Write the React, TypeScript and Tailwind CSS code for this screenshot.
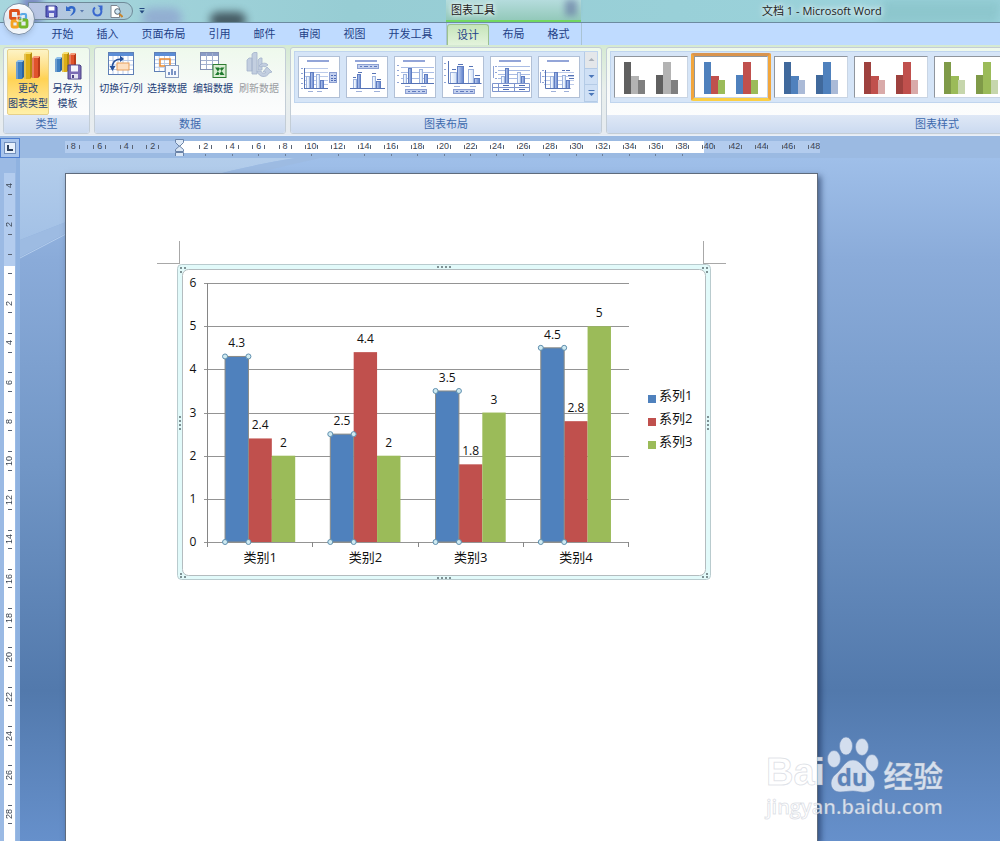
import type { ReactNode } from "react";

const tabs = [
  { name: "开始", wide: false },
  { name: "插入", wide: false },
  { name: "页面布局", wide: true },
  { name: "引用", wide: false },
  { name: "邮件", wide: false },
  { name: "审阅", wide: false },
  { name: "视图", wide: false },
  { name: "开发工具", wide: true },
];

const chartStyles = [
  ["#606060", "#b3b3b3", "#7f7f7f"],
  ["#4f81bd", "#c0504d", "#9bbb59"],
  ["#40699c", "#4f81bd", "#aabad7"],
  ["#9e413e", "#c0504d", "#d9aaa9"],
  ["#7f9a48", "#9bbb59", "#c6d6ac"],
];

const series = [
  { name: "系列1", color: "#4f81bd", values: [4.3, 2.5, 3.5, 4.5] },
  { name: "系列2", color: "#c0504d", values: [2.4, 4.4, 1.8, 2.8] },
  { name: "系列3", color: "#9bbb59", values: [2, 2, 3, 5] },
];
const categories = ["类别1", "类别2", "类别3", "类别4"];

const hMarks = [8, 6, 4, 2, 0, ...Array.from({ length: 24 }, (_, i) => (i + 1) * 2)];
const vMarks = [4, 2, 0, ...Array.from({ length: 14 }, (_, i) => (i + 1) * 2)];

/* ---------- icons ---------- */

function Column({ x, y, h, w, front, side, top }: { x: number; y: number; h: number; w: number; front: string; side: string; top: string }) {
  return (
    <g>
      <path d={`M${x} ${y + 2}h${w}v${h}h${-w}z`} fill={front} />
      <path d={`M${x + w} ${y + 2}l2 -2v${h}l-2 2z`} fill={side} />
      <path d={`M${x} ${y + 2}l2 -2h${w}l-2 2z`} fill={top} />
      <path d={`M${x} ${y + 2}h2v${h}h-2z`} fill="#fff" opacity="0.25" />
    </g>
  );
}

function ChartTypeIcon() {
  return (
    <svg width="26" height="28" viewBox="0 0 26 28">
      <Column x={1} y={8} h={17} w={6} front="#3f7fc0" side="#2a639f" top="#8fc0ea" />
      <Column x={9} y={0} h={25} w={6} front="#dcae18" side="#b58a0c" top="#f8e27a" />
      <Column x={17} y={4} h={20} w={6} front="#e0532c" side="#b93a19" top="#f59b78" />
    </svg>
  );
}

function SaveTemplateIcon() {
  return (
    <svg width="28" height="28" viewBox="0 0 28 28">
      <Column x={1} y={5} h={13} w={5} front="#3f7fc0" side="#2a639f" top="#8fc0ea" />
      <Column x={8} y={0} h={18} w={5} front="#dcae18" side="#b58a0c" top="#f8e27a" />
      <Column x={15} y={1} h={16} w={5} front="#e0532c" side="#b93a19" top="#f59b78" />
      <path d="M14 13h12l1 1v13h-13z" fill="#7a6bb4" stroke="#4d4386" />
      <path d="M17 13.500h7v6h-7z" fill="#f4f4fb" />
      <path d="M17 22h7v4.500h-7z" fill="#e4e3f1" />
      <path d="M18 23h2v3h-2z" fill="#4d4386" />
    </svg>
  );
}

function TableGrid({ w, h, cols, rows, tone }: { w: number; h: number; cols: number; rows: number; tone: string }) {
  return (
    <g>
      <rect x="0.500" y="0.500" width={w} height={h} fill="#fff" stroke={tone} />
      <rect x="1" y="1" width={w - 1} height="3" fill="#5b8ed6" />
      {Array.from({ length: cols - 1 }, (_, i) => (
        <path key={`c${i}`} d={`M${((i + 1) * w) / cols} 4V${h}`} stroke="#b9cbe8" />
      ))}
      {Array.from({ length: rows - 1 }, (_, i) => (
        <path key={`r${i}`} d={`M1 ${4 + ((i + 1) * (h - 4)) / rows}H${w}`} stroke="#b9cbe8" />
      ))}
    </g>
  );
}

function SwitchIcon() {
  return (
    <svg width="26" height="26" viewBox="0 0 26 26">
      <TableGrid w={25} h={22} cols={5} rows={4} tone="#5f7fb6" />
      <rect x="9" y="11" width="12" height="7" fill="#fde0c2" stroke="#e8a05c" />
      <path d="M4 17C4 10 8 7 13 7" fill="none" stroke="#27529c" strokeWidth="1.600" />
      <path d="M12 3.500l4 3.500l-4 3z" fill="#27529c" />
      <path d="M1.500 14l3 5l3 -5z" fill="#27529c" />
    </svg>
  );
}

function SelectDataIcon() {
  return (
    <svg width="26" height="26" viewBox="0 0 26 26">
      <TableGrid w={21} h={19} cols={4} rows={4} tone="#5f7fb6" />
      <rect x="6" y="7" width="10" height="7" fill="none" stroke="#ec8b2f" strokeWidth="1.500" />
      <rect x="11.500" y="13.500" width="13" height="12" fill="#f6f9fe" stroke="#8c9fc0" />
      <path d="M14 23v-3h2v3zM17 23v-6h2v6zM20 23v-4h2v4z" fill="#7b94c4" />
    </svg>
  );
}

function EditDataIcon() {
  return (
    <svg width="27" height="26" viewBox="0 0 27 26">
      <rect x="0.500" y="0.500" width="18" height="17" fill="#fff" stroke="#8391b4" />
      <rect x="1" y="1" width="17" height="3" fill="#8a9cc6" />
      <path d="M6.500 1v16M12.500 1v16M1 8.500h17M1 12.500h17" stroke="#a3b1cf" />
      <rect x="13" y="12.500" width="13" height="13" fill="#d8ecd2" stroke="#2f7d32" />
      <path d="M15 15.500h4l5.500 7.500h-4zM24.500 15.500h-3.500l-6 7.500h3.500z" fill="#1f7a2d" />
    </svg>
  );
}

function RefreshIcon() {
  return (
    <svg width="27" height="26" viewBox="0 0 27 26">
      <g fill="#c3cfe0" stroke="#a3b3cb" strokeWidth="0.800">
        <path d="M1 8l2-2h3v13H1zM6 2l2-1.500h3V22H6zM12 8l2-2h2v12h-4z" />
        <path d="M11 19c2 7 10 7 12 2l3-1l-5-5l-4 5h3c-1 2-4 2-5-1zM13 14c2-3 7-4 9-1l-3 2c-1-1-3-1-4 0z" />
      </g>
    </svg>
  );
}

function OfficeLogo() {
  return (
    <svg width="22" height="22" viewBox="0 0 22 22" fill="none" strokeWidth="2.800">
      <rect x="2.500" y="2.500" width="8" height="8" rx="1" stroke="#dd4f1c" />
      <rect x="13" y="6" width="5" height="5" rx="1" stroke="#5aa9e6" strokeWidth="2.200" />
      <rect x="4" y="13" width="6" height="6" rx="1" stroke="#f4a320" />
      <rect x="12" y="12" width="7" height="7" rx="1" stroke="#74b72c" />
      <path d="M9 8h5v5H9z" stroke="#fff" strokeWidth="1" />
    </svg>
  );
}

function Bar({ x, y, w, base, dark }: { x: number; y: number; w: number; base: number; dark?: boolean }) {
  return <rect x={x + 0.5} y={y + 0.5} width={w - 1} height={base - y} fill={dark ? "url(#barDark)" : "url(#barLight)"} stroke={dark ? "#5f7dc2" : "#9db3de"} />;
}

function LegendStrip({ y }: { y: number }) {
  return (
    <g>
      <rect x="11.500" y={y + 0.5} width="21" height="4" fill="#c3d0ee" stroke="#8b9fd2" />
      <path d={`M14 ${y + 2.5}h2M18 ${y + 2.5}h4M24 ${y + 2.5}h2M28 ${y + 2.5}h3`} stroke="#5f79bd" />
    </g>
  );
}

function LayoutThumb({ kind }: { kind: number }) {
  const title = <rect x="9" y="4" width="22" height="2" fill="#93a5d8" />;
  const art: ReactNode[] = [
    <g key="0">
      {title}
      <path d="M6 12.500h24M6 16.500h24M6 20.500h24M6 24.500h24M6 28.500h24" stroke="#bccbea" />
      <path d="M3 12.500h2M3 17.500h2M3 22.500h2M3 27.500h2M3 32.500h2" stroke="#8fa4d6" />
      <Bar x={8} y={20} w={4} base={32} />
      <Bar x={12} y={16} w={4} base={32} dark />
      <Bar x={18} y={18} w={4} base={32} />
      <Bar x={22} y={24} w={4} base={32} dark />
      <path d="M6 32.500h24M6.500 12v21" stroke="#5673b5" />
      <path d="M10 35.500h5M19 35.500h5" stroke="#9eb0da" />
      <rect x="31.500" y="16.500" width="7" height="10" fill="#c3d0ee" stroke="#8b9fd2" />
      <path d="M33 19.500h2M36 19.500h2M33 22.500h2M36 22.500h2M33 24.500h2M36 24.500h2" stroke="#4f6bb5" />
    </g>,
    <g key="1">
      {title}
      <LegendStrip y={8} />
      <Bar x={7} y={23} w={4} base={32} />
      <Bar x={11} y={18} w={4} base={32} dark />
      <Bar x={26} y={20} w={4} base={32} />
      <Bar x={30} y={25} w={5} base={32} dark />
      <path d="M4 32.500h35M7 21.500h3M12 16.500h4M26 17.500h4M31 23.500h4" stroke="#5673b5" />
      <path d="M10 35.500h6M28 35.500h6" stroke="#9eb0da" />
    </g>,
    <g key="2">
      {title}
      <path d="M7 11.500h33M7 16.500h33M7 22.500h33" stroke="#a9bce4" />
      <path d="M3 9.500h2M3 14.500h2M3 19.500h2M3 26.500h2" stroke="#8fa4d6" />
      <Bar x={9} y={18} w={4} base={27} />
      <Bar x={14} y={12} w={4} base={27} dark />
      <Bar x={25} y={13} w={4} base={27} />
      <Bar x={30} y={18} w={4} base={27} dark />
      <path d="M7 27.500h33" stroke="#5673b5" />
      <path d="M11 30.500h5M27 30.500h5" stroke="#9eb0da" />
      <LegendStrip y={33} />
    </g>,
    <g key="3">
      <Bar x={8} y={16} w={7} base={27} />
      <Bar x={15} y={10} w={7} base={27} dark />
      <Bar x={26} y={13} w={6} base={27} />
      <Bar x={32} y={22} w={6} base={27} dark />
      <path d="M6.500 5v22.500h33M10 13.500h4M16 8.500h5M27 10.500h4M33 19.500h5" stroke="#5673b5" fill="none" />
      <path d="M2 7.500h2M2 13.500h2M2 19.500h2M2 26.500h2" stroke="#8fa4d6" />
      <path d="M12 30.500h6M28 30.500h6" stroke="#9eb0da" />
      <LegendStrip y={33} />
    </g>,
    <g key="4">
      {title}
      <path d="M8 10.500h32M8 14.500h32M8 18.500h32M8 22.500h32" stroke="#a9bce4" />
      <path d="M3.500 10v12M5 10.500h2M5 16.500h2M5 22.500h2" stroke="#8fa4d6" />
      <Bar x={11} y={20} w={4} base={27} />
      <Bar x={15} y={12} w={4} base={27} dark />
      <Bar x={27} y={16} w={4} base={27} />
      <Bar x={31} y={20} w={4} base={27} dark />
      <path d="M2.500 27.500h37v8h-37zM2 31.500h38M8.500 27v8M24.500 27v8" stroke="#7e95cd" fill="none" />
      <path d="M13 29.500h6M29 29.500h6M13 33.500h6M29 33.500h6" stroke="#4d6cb4" />
    </g>,
    <g key="5">
      {title}
      <path d="M6 16.500h30M6 20.500h30M6 24.500h30M6 28.500h30" stroke="#bccbea" />
      <path d="M2.500 16v11M4 14.500h2M4 20.500h2M4 26.500h2" stroke="#8fa4d6" />
      <Bar x={12} y={20} w={4} base={32} />
      <Bar x={16} y={16} w={4} base={32} dark />
      <Bar x={24} y={19} w={4} base={32} />
      <Bar x={28} y={24} w={4} base={32} dark />
      <path d="M7.500 14v18.500h25M24 14.500h3M28 14.500h4M30 19.500h6M31 22.500h5" stroke="#5673b5" fill="none" />
      <path d="M13 35.500h5M26 35.500h5" stroke="#9eb0da" />
    </g>,
  ];
  return (
    <svg width="40" height="40" viewBox="1 1 40 40">
      <defs>
        <linearGradient id="barDark">
          <stop offset="0" stopColor="#c5d4f2" />
          <stop offset="1" stopColor="#5c7fcb" />
        </linearGradient>
        <linearGradient id="barLight">
          <stop offset="0" stopColor="#fff" />
          <stop offset="1" stopColor="#cfe0f8" />
        </linearGradient>
      </defs>
      {art[kind]}
    </svg>
  );
}

function StyleThumb({ colors }: { colors: string[] }) {
  const [a, b, c] = colors;
  return (
    <svg width="72" height="40" viewBox="1 1 72 40">
      <path d="M10 6h7v32h-7z" fill={a} />
      <path d="M17 20h8v18h-8z" fill={b} />
      <path d="M24 24h7v14h-7z" fill={c} />
      <path d="M42 19h7v19h-7z" fill={a} />
      <path d="M49 6h8v32h-8z" fill={b} />
      <path d="M57 24h7v14h-7z" fill={c} />
    </svg>
  );
}

/* ---------- ribbon ---------- */

function Group({ title, className, children }: { title: string; className: string; children: ReactNode }) {
  return (
    <section className={`flex shrink-0 flex-col overflow-hidden rounded-[3px] border border-[#c3cdd6] bg-linear-to-b from-[#eef9ec] via-[#f8fafa] to-white ${className}`}>
      <div className="flex h-[69px] px-[3px]">{children}</div>
      <h2 className="h-[18px] bg-linear-to-b from-[#dfe8f6] to-[#cbdaf0] text-center text-[11px] leading-[18px] text-[#3d6aae]">{title}</h2>
    </section>
  );
}

function BigButton({ icon, lines, active, disabled }: { icon: ReactNode; lines: string[]; active?: boolean; disabled?: boolean }) {
  return (
    <button
      disabled={disabled}
      className={`flex flex-1 flex-col items-center whitespace-nowrap pt-[2px] text-[10px] leading-[15px] ${
        active ? "mt-px rounded-[2px] border border-[#e6d08a] bg-linear-to-b from-[#fdf3c4] from-0% via-[#ffd253] via-45% to-[#fff0a8]" : "mt-[2px]"
      } ${disabled ? "text-[#9a9da1]" : "text-[#1e3f77]"}`}
    >
      <span className="flex h-[29px] items-start justify-center">{icon}</span>
      {lines.map((line) => (
        <span key={line}>{line}</span>
      ))}
    </button>
  );
}

function ScrollButton({ label, path, off }: { label: string; path: string; off?: boolean }) {
  return (
    <button aria-label={label} className={`flex flex-1 items-center justify-center border-b border-l border-[#b4cbe6] ${off ? "bg-[#e4e7ea] text-[#aab1ba]" : "bg-[#cfe0f5] text-[#4a76b8]"}`}>
      <svg width="7" height="7" viewBox="0 0 7 7" fill="currentColor">
        <path d={path} />
      </svg>
    </button>
  );
}

function Ribbon() {
  return (
    <div className="flex h-[91px] gap-1 overflow-hidden border-b border-[#e8eff8] bg-linear-to-b from-[#d5ead2] via-[#e9efec] to-[#e6ebf1] pl-[3px] pt-[2px] pb-px">
      <Group title="类型" className="w-[87px]">
        <BigButton active icon={<ChartTypeIcon />} lines={["更改", "图表类型"]} />
        <BigButton icon={<SaveTemplateIcon />} lines={["另存为", "模板"]} />
      </Group>
      <Group title="数据" className="w-[192px]">
        <BigButton icon={<SwitchIcon />} lines={["切换行/列"]} />
        <BigButton icon={<SelectDataIcon />} lines={["选择数据"]} />
        <BigButton icon={<EditDataIcon />} lines={["编辑数据"]} />
        <BigButton disabled icon={<RefreshIcon />} lines={["刷新数据"]} />
      </Group>
      <Group title="图表布局" className="w-[312px]">
        <div className="mt-[3px] flex h-[52px] flex-1 gap-[6px] border border-[#c0d5ee] bg-[#d6e5f7] pl-[3px]">
          {[0, 1, 2, 3, 4, 5].map((kind) => (
            <button key={kind} aria-label={`布局 ${kind + 1}`} className="mt-1 size-[42px] shrink-0 border border-[#b1c0d6] bg-white">
              <LayoutThumb kind={kind} />
            </button>
          ))}
          <div className="-ml-[2px] flex flex-1 flex-col">
            <ScrollButton off label="向上" path="M0.500 5l3-3l3 3z" />
            <ScrollButton label="向下" path="M0.500 2l3 3l3-3z" />
            <ScrollButton label="更多" path="M0.500 0h6v1h-6zM0.500 3l3 3l3-3z" />
          </div>
        </div>
      </Group>
      <Group title="图表样式" className="w-[662px]">
        <div className="mt-[3px] flex h-[52px] flex-1 items-start border border-[#c0d5ee] bg-[#d6e5f7]">
          {chartStyles.map((colors, i) => (
            <button
              key={colors[0]}
              aria-label={`样式 ${i + 1}`}
              aria-pressed={i === 1}
              className={`mt-px shrink-0 border-[3px] ${i === 1 ? "rounded-[2px] border-x-[#f2a63c] border-t-[#d9944e] border-b-[#fbcf45]" : "border-transparent"}`}
            >
              <span className="flex h-[42px] w-[74px] border border-t-[#8f959d] border-r-[#c9d5e4] border-b-[#c9d5e4] border-l-[#8f959d] bg-white">
                <StyleThumb colors={colors} />
              </span>
            </button>
          ))}
        </div>
      </Group>
    </div>
  );
}

function TitleBar() {
  return (
    <header className="relative flex h-[22px] items-center overflow-hidden bg-linear-to-r from-[#a7d6de] via-[#97cdd4] via-35% to-[#9bd3dc]">
      <div className="absolute top-3 left-[210px] h-4 w-9 rounded-full bg-[#2f3d46] opacity-80 blur-[4px]" />
      <div className="absolute top-2 left-[142px] h-5 w-10 rounded-full bg-[#8fa6d0] opacity-80 blur-[4px]" />
      <div className="absolute top-0 left-[880px] h-6 w-30 -skew-x-12 bg-[#84bfc4] opacity-60 blur-[5px]" />
      <div className="absolute -top-1 left-[22px] h-7 w-5 bg-[#5a4fae] opacity-60 blur-[4px]" />
      <div className="relative ml-7 flex h-[18px] w-[105px] items-center gap-[9px] rounded-r-full border border-[#6f8a99] bg-linear-to-r from-[#b8c4e4] to-[#a9cdd8] pl-[16px]">
        <button aria-label="保存">
          <svg width="13" height="13" viewBox="0 0 13 13">
            <path d="M1 1h10l1 1v10H1z" fill="#5b5fc0" stroke="#33378f" />
            <path d="M3.500 1.500h6v4h-6z" fill="#fff" />
            <path d="M4 8h5v4H4z" fill="#dcdff5" />
          </svg>
        </button>
        <button aria-label="撤消" className="-ml-[2px]">
          <svg width="20" height="12" viewBox="0 0 20 12">
            <path d="M1 1v5h5L4.500 4.500C7 2.500 9 4 8 6.500C7.500 8 6 9.500 5 11C9 9.500 11 7 10.500 4C10 1 6 0 3 2.500z" fill="#3167c8" />
            <path d="M15 5h4l-2 2.500z" fill="#5a79ae" />
          </svg>
        </button>
        <button aria-label="重复" className="-ml-[2px]">
          <svg width="11" height="12" viewBox="0 0 11 12">
            <path d="M3 2.500C0 5 1.500 10.500 5.500 10.500C9.500 10.500 10.500 5.500 8 3" fill="none" stroke="#3a68cf" strokeWidth="2" />
            <path d="M5.500 0.500h5v4.500z" fill="#3a68cf" />
          </svg>
        </button>
        <button aria-label="打印预览" className="-ml-[2px]">
          <svg width="13" height="13" viewBox="0 0 13 13">
            <path d="M1 0.500h6l2.500 2.500v9.500H1z" fill="#fff" stroke="#7d8590" />
            <circle cx="7.500" cy="6.500" r="2.800" fill="#cfe6f5" stroke="#54626f" />
            <path d="M9.500 9l3 3" stroke="#c8862e" strokeWidth="2" />
          </svg>
        </button>
      </div>
      <button aria-label="自定义快速访问工具栏" className="relative ml-[6px]">
        <svg width="6" height="6" viewBox="0 0 6 6" fill="#23477f">
          <path d="M0.500 0h5v1h-5zM0.500 2.500h5L3 5.500z" />
        </svg>
      </button>
      <div className="relative ml-[301px] flex h-full w-[135px] items-start border-b-2 border-[#72d860] bg-linear-to-b from-[#b5dcdd] to-[#93c9ba] pl-[5px] text-[11px] leading-[20px] text-[#1a1a1a]">
        <span className="[text-shadow:0_0_4px_#fff,0_0_6px_#fff]">图表工具</span>
        <span className="absolute top-0 right-1 h-4 w-3 bg-[#5f6f9f] opacity-60 blur-[3px]" />
      </div>
      <h1 className="relative ml-[181px] whitespace-nowrap text-[11px] text-[#222] [text-shadow:0_0_5px_#fff,0_0_8px_#fff]">文档 1 - Microsoft Word</h1>
    </header>
  );
}

function Tabs() {
  return (
    <nav className="flex h-[23px] border-t border-[#6c8ba0] bg-[#bfdbff] pl-10 text-[11px] text-[#1e4187]">
      {tabs.map((tab) => (
        <button key={tab.name} className={`whitespace-nowrap ${tab.wide ? "w-[67px]" : "w-[45px]"}`}>
          {tab.name}
        </button>
      ))}
      <div className="ml-[2px] flex border-x border-[#a9c3d4]">
        <button aria-current="page" className="mt-px w-[42px] rounded-t-[3px] border border-b-0 border-[#9cc28f] bg-linear-to-b from-[#c5e5ba] to-[#e3f3dc]">
          设计
        </button>
        <button className="ml-[2px] w-[45px]">布局</button>
        <button className="w-[45px]">格式</button>
      </div>
    </nav>
  );
}

/* ---------- rulers ---------- */

function HorizontalRuler() {
  return (
    <div className="flex h-[22px] items-start bg-[#9bbae2] pt-[2px]">
      <button aria-label="制表符" className="flex size-[20px] shrink-0 items-center justify-center border border-[#4f7fd0] bg-[#a9c5ec]">
        <span className="flex size-[12px] items-center justify-center border border-[#7290bd] bg-[#e8f1fc]">
          <span className="size-[6px] border-b-2 border-l-2 border-[#2c3e5a]" />
        </span>
      </button>
      <div className="mr-[180px] ml-[45px] h-[18px] flex-1 overflow-hidden pt-[3px]">
        <div className="-mr-[8px] -ml-[5px] flex bg-[linear-gradient(90deg,#b3ccee_15.5%,#fff_15.5%,#fff_83.8%,#b3ccee_83.8%)] bg-[length:100%_12px] bg-no-repeat">
          {hMarks.map((n, i) => (
            <div key={i} className="min-w-0 flex-1">
              <div className="flex h-[12px] items-center justify-center">
                {n === 0 ? (
                  <svg width="11" height="17" viewBox="0 0 11 17" className="relative shrink-0 overflow-visible">
                    <path d="M1.500 0.500h8v3l-4 4l-4-4zM1.500 12.500v-2l4-3.500l4 3.500v2zM1.500 13.500h8v4h-8z" fill="#dce8f6" stroke="#6a83a8" />
                  </svg>
                ) : (
                  <div
                    className={`flex h-[4px] w-1/2 items-center justify-center border-[#5a6474] font-['Liberation_Sans',sans-serif] text-[9px] text-[#3a4452] ${
                      n === 48 ? "border-l" : "border-x"
                    }`}
                  >
                    {n}
                  </div>
                )}
              </div>
              {i > 4 && n < 40 && <div className="mx-auto mt-px h-[2px] w-px bg-[#6d7f99]" />}
            </div>
          ))}
        </div>
      </div>
    </div>
  );
}

function VerticalRuler() {
  return (
    <div className="w-5 shrink-0 border-r-4 border-[#8fb2e0] bg-[#9bbae4] pt-[15px] pl-1">
      <div className="h-full w-[11px] overflow-hidden bg-[linear-gradient(#b3ccee_93px,#fff_93px)]">
        <div className="-mt-[7px] flex h-[668px] flex-col">
          {vMarks.map((n, i) => (
            <div key={i} className="flex flex-1 flex-col items-center justify-center">
              <div className={`flex h-1/2 w-[4px] items-center justify-center border-[#5a6474] ${i === 0 ? "border-b" : "border-y"}`}>
                {n > 0 && (
                  <span className="rotate-180 font-['Liberation_Sans',sans-serif] text-[9px] leading-[9px] text-[#3a4452] [writing-mode:vertical-rl]">{n}</span>
                )}
              </div>
            </div>
          ))}
        </div>
      </div>
    </div>
  );
}

/* ---------- document ---------- */

const BASE = 278;
const UNIT = 43.15;
const LEFT = 30.5;
const GROUP = 105.25;
const BAR = GROUP / 4.5;

function Chart() {
  const y = (v: number) => BASE - v * UNIT;
  const barX = (s: number, c: number) => LEFT + c * GROUP + BAR * (0.75 + s);

  return (
    <svg viewBox="0 0 534 316" className="block w-full" fontFamily='"Open Sans", "Noto Sans CJK SC", sans-serif' fontSize="12" fontWeight="500" fill="#111">
      <rect x="0.500" y="0.500" width="533" height="315" rx="4" fill="#e2fafa" stroke="#b9cbce" />
      <rect x="5.500" y="5.500" width="523" height="306" rx="6" fill="#fff" stroke="#b4bcbf" />

      {[0, 1, 2, 3, 4, 5, 6].map((v) => (
        <g key={v}>
          <path d={`M27 ${Math.round(y(v)) + 0.5}H452`} stroke="#949494" />
          <text x="16" y={y(v) + 4} textAnchor="middle">{v}</text>
        </g>
      ))}
      <path d={`M30.500 19V${BASE}`} stroke="#868686" />
      {[0, 1, 2, 3, 4].map((c) => (
        <path key={c} d={`M${Math.floor(LEFT + c * GROUP) + 0.5} ${BASE}v5`} stroke="#868686" />
      ))}

      {series.map((s, si) =>
        s.values.map((v, c) => <rect key={`${si}-${c}`} x={barX(si, c)} y={y(v)} width={BAR} height={v * UNIT} fill={s.color} />)
      )}
      {series.map((s, si) =>
        s.values.map((v, c) => (
          <text key={`${si}-${c}`} x={barX(si, c) + BAR / 2} y={y(v) - 9} textAnchor="middle">
            {v}
          </text>
        ))
      )}

      {/* selection outline of the first series */}
      {series[0].values.map((v, c) => {
        const x0 = barX(0, c);
        return (
          <g key={c}>
            <rect x={x0} y={y(v)} width={BAR} height={v * UNIT} fill="none" stroke="#8b8b86" />
            {[x0, x0 + BAR].map((x) =>
              [y(v), BASE].map((cy) => <circle key={`${x}-${cy}`} cx={x} cy={cy} r="2.500" fill="#cfeaf2" stroke="#5f8fae" />)
            )}
          </g>
        );
      })}

      {categories.map((name, c) => (
        <text key={name} x={LEFT + (c + 0.5) * GROUP} y="298" fontSize="13" fontWeight="400" textAnchor="middle">
          {name}
        </text>
      ))}
      {series.map((s, i) => (
        <g key={s.name}>
          <rect x="471" y={131 + i * 23} width="8" height="8" fill={s.color} />
          <text x="482" y={136 + i * 23} fontSize="13" fontWeight="400">{s.name}</text>
        </g>
      ))}

      {/* grips on the frame */}
      <g stroke="#7e9194" strokeWidth="2" strokeDasharray="2 2">
        <path d="M260 3h14M260 314h14M3 152v14M531 152v14" />
        <path d="M3 4h6M3 8h2M525 4h6M529 8h2M3 310h2M3 313h6M529 310h2M525 313h6" />
      </g>
    </svg>
  );
}

function Page() {
  return (
    <main className="relative mt-[15px] mr-[182px] ml-[45px] flex-1 border border-b-0 border-[#5f6b7c] bg-white pt-[67px] shadow-[3px_3px_6px_rgba(20,40,80,0.6)]">
      <div className="mx-[91px]">
        <div className="flex justify-between">
          <div className="h-[23px] w-[23px] border-r border-b border-[#a8a8a8]" />
          <div className="h-[23px] w-[23px] border-b border-l border-[#a8a8a8]" />
        </div>
        <div className="mr-[15px] ml-[20px]">
          <Chart />
        </div>
      </div>
    </main>
  );
}

function Backdrop() {
  return (
    <svg className="absolute inset-0 size-full" viewBox="0 0 980 683" preserveAspectRatio="none">
      <defs>
        <linearGradient id="desk" x2="0" y2="1">
          <stop offset="0" stopColor="#9fbfe9" />
          <stop offset="0.150" stopColor="#8aabd9" />
          <stop offset="0.450" stopColor="#7196c6" />
          <stop offset="0.780" stopColor="#5279ac" />
          <stop offset="1" stopColor="#6690cb" />
        </linearGradient>
        <linearGradient id="glow" x2="0" y2="1">
          <stop offset="0" stopColor="#b3cdeb" />
          <stop offset="1" stopColor="#a3c1e6" />
        </linearGradient>
      </defs>
      <path d="M0 0h980v683H0z" fill="url(#desk)" />
      <path d="M0 0H275C200 12 120 36 46 64L0 82z" fill="url(#glow)" />
      <path d="M0 82L46 64C120 36 200 12 275 0H300C220 18 130 42 46 75L0 99z" fill="#9dbbe2" />
      <path d="M0 100L46 76" stroke="#b4cdec" fill="none" />
    </svg>
  );
}

function Watermark() {
  return (
    <div className="absolute right-[54px] bottom-[20px] w-[180px] font-bold text-white/75 [-webkit-text-stroke:1px_rgba(130,140,160,0.25)]">
      <div className="flex h-[58px] items-end whitespace-nowrap">
        <span className="font-['Liberation_Sans',sans-serif] text-[38px] leading-[42px]">Bai</span>
        <div className="relative h-[58px] w-[54px] shrink-0">
          <svg viewBox="0 0 54 58" className="size-full" fill="#d3deee" stroke="#6f8fbd" strokeWidth="0.600">
            <ellipse cx="9" cy="24" rx="6.500" ry="8.500" />
            <ellipse cx="21" cy="11" rx="6.500" ry="9" />
            <ellipse cx="37" cy="12" rx="6.500" ry="8.500" />
            <ellipse cx="47" cy="28" rx="6.500" ry="8.500" />
            <path d="M28 25C20 25 18 33 11 39C3 45 5 57 15 57C20 57 23 56 28 56C33 56 36 58 41 57C51 56 52 46 46 40C39 34 36 25 28 25z" />
          </svg>
          <span className="absolute inset-x-0 bottom-[4px] text-center text-[24px] leading-[24px] text-[#5a83bb]">du</span>
        </div>
        <span className="ml-1 text-[30px] leading-[34px]">经验</span>
      </div>
      <div className="text-[20px] leading-[28px] font-semibold">jingyan.baidu.com</div>
    </div>
  );
}

export default function App() {
  return (
    <div className='relative flex min-h-screen flex-col overflow-hidden font-["Open_Sans","Noto_Sans_CJK_SC",sans-serif]'>
      <TitleBar />
      <Tabs />
      <button aria-label="Office 按钮" className="absolute top-[3px] left-[3px] flex size-[32px] items-center justify-center rounded-full border border-[#7c8fa6] bg-linear-to-b from-white via-[#dfe6ef] to-[#f6f9fc] shadow-md">
        <OfficeLogo />
      </button>
      <Ribbon />
      <HorizontalRuler />
      <div className="flex flex-1">
        <VerticalRuler />
        <div className="relative flex flex-1 flex-col">
          <Backdrop />
          <Page />
        </div>
      </div>
      <Watermark />
    </div>
  );
}
